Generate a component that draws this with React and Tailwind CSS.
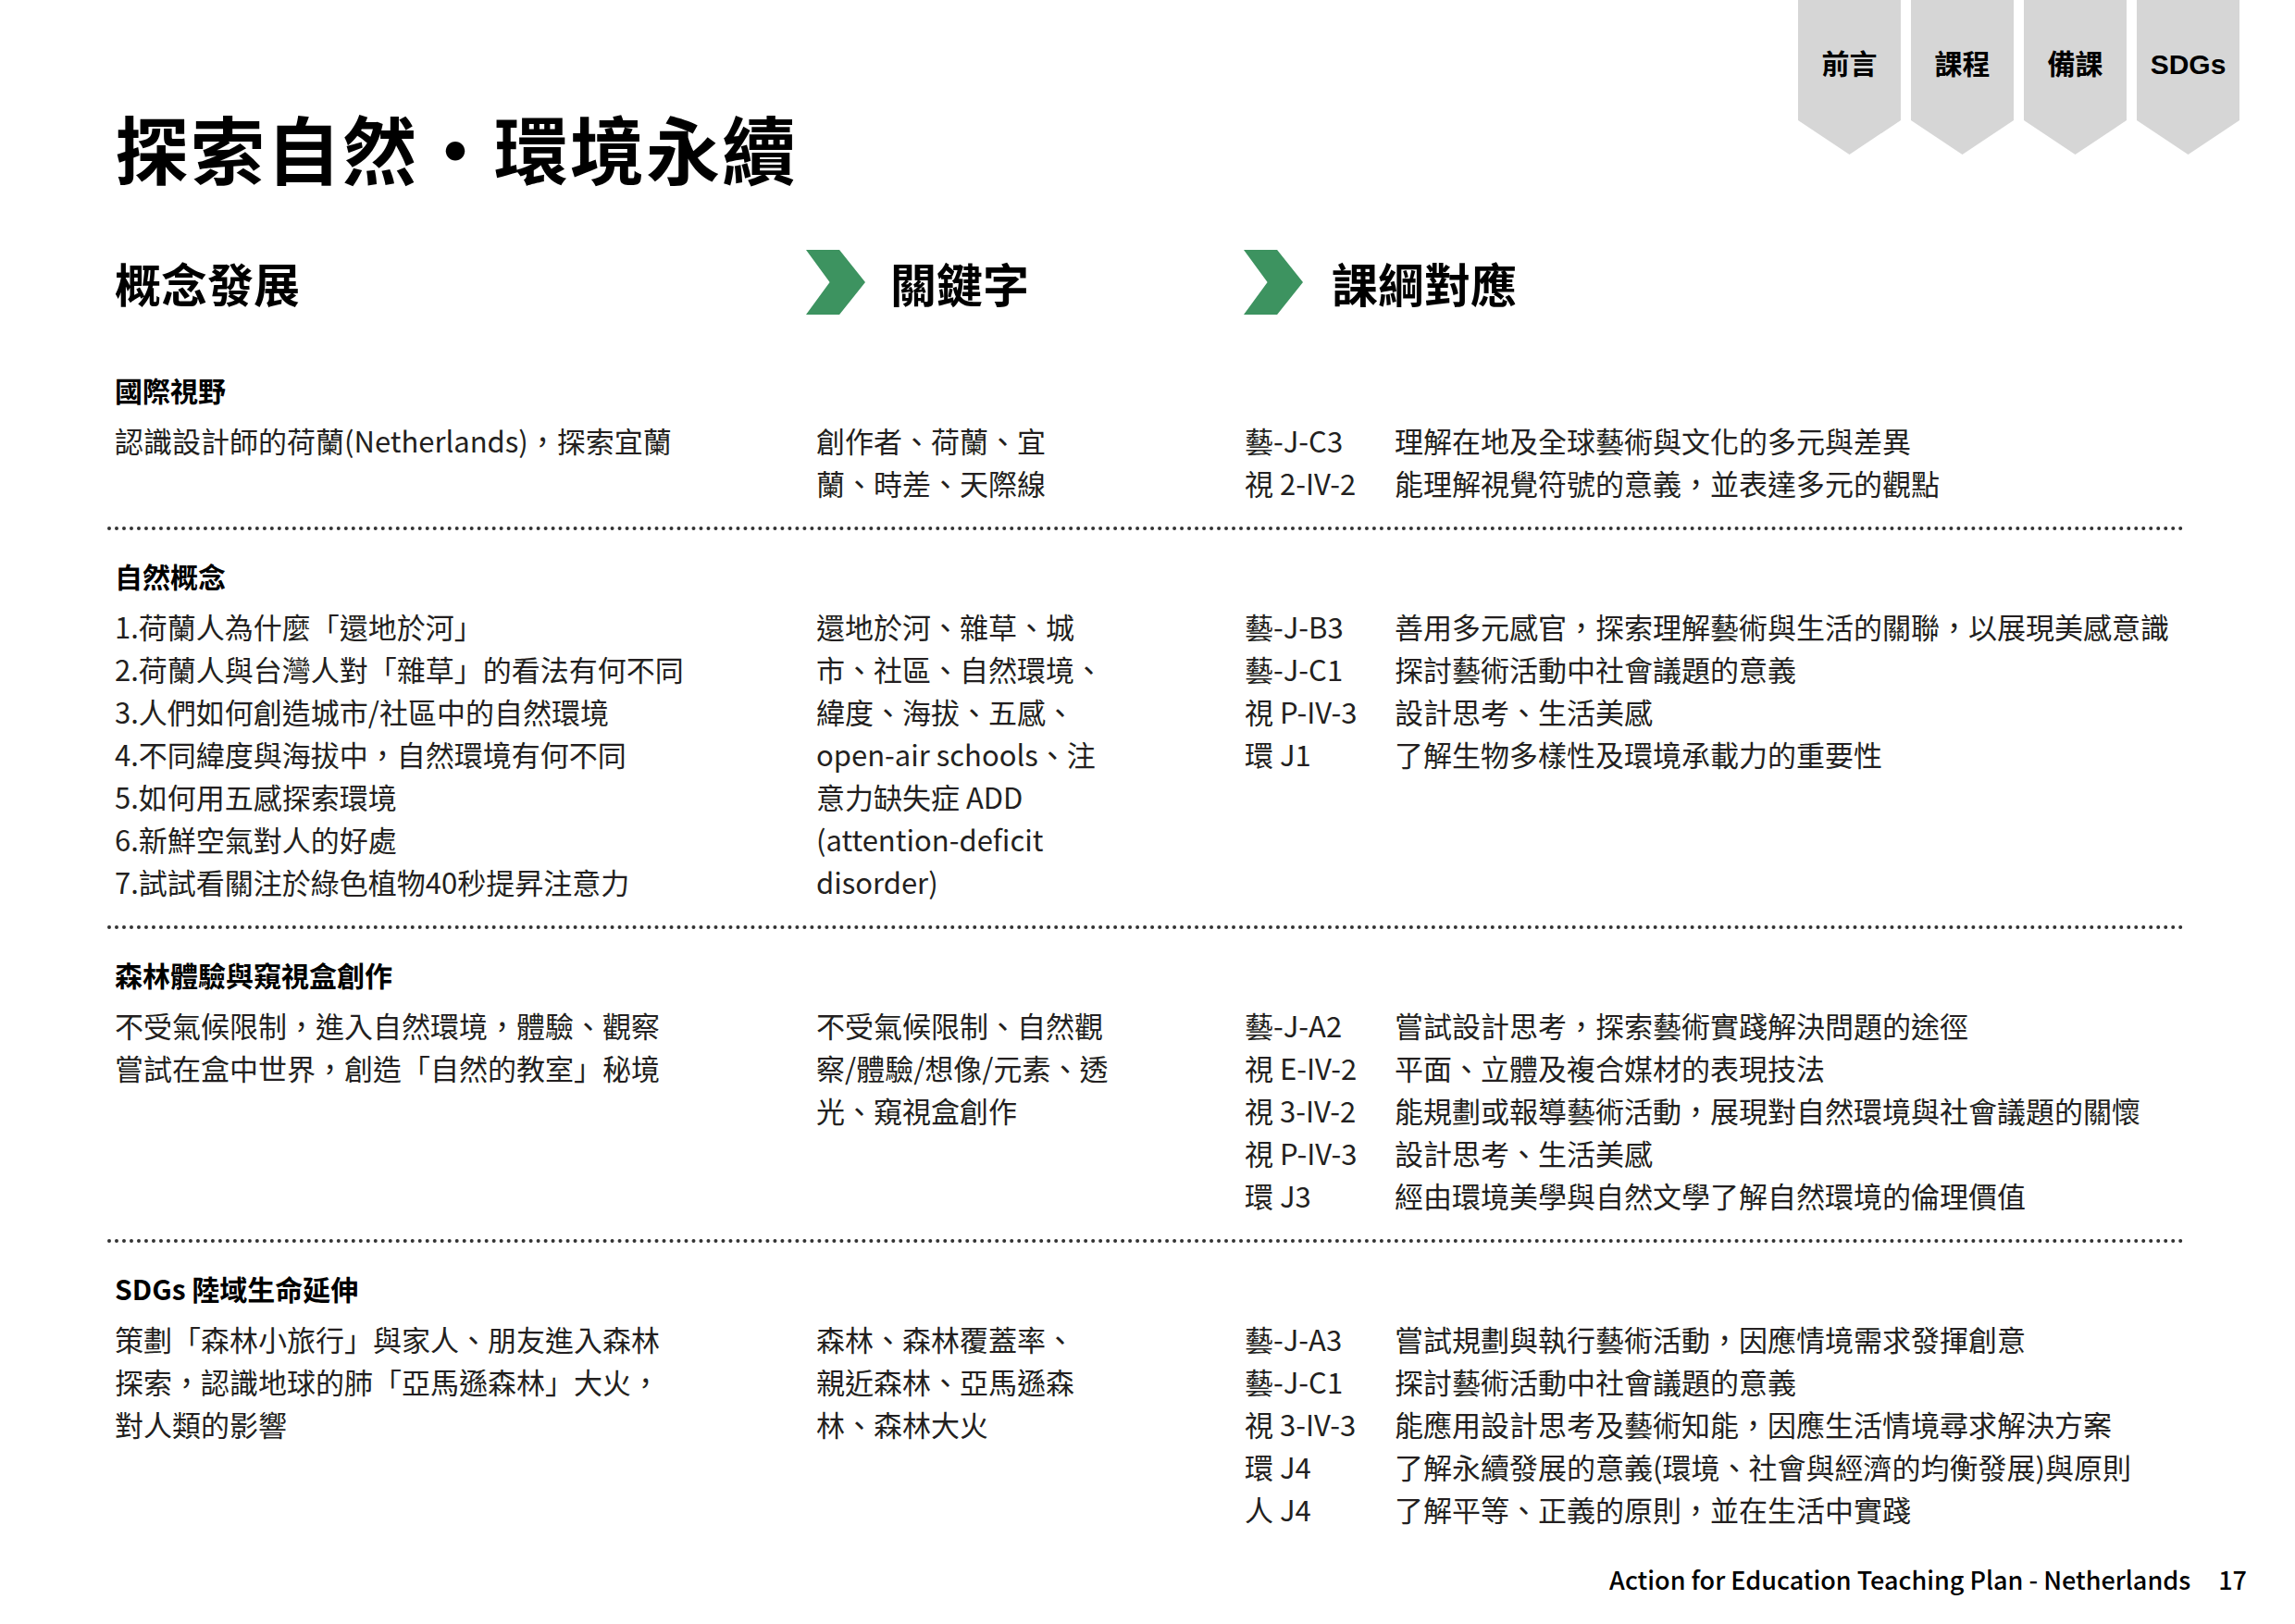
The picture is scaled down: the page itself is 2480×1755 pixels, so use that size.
import React from 'react';

const font = { fontFamily: '"Noto Sans CJK TC", "Noto Sans", sans-serif' };

const sections = [
  {
    title: '國際視野',
    concept: ['認識設計師的荷蘭(Netherlands)，探索宜蘭'],
    keywords: ['創作者、荷蘭、宜', '蘭、時差、天際線'],
    codes: [
      ['藝-J-C3', '理解在地及全球藝術與文化的多元與差異'],
      ['視 2-IV-2', '能理解視覺符號的意義，並表達多元的觀點'],
    ],
  },
  {
    title: '自然概念',
    concept: [
      '1.荷蘭人為什麼「還地於河」',
      '2.荷蘭人與台灣人對「雜草」的看法有何不同',
      '3.人們如何創造城市/社區中的自然環境',
      '4.不同緯度與海拔中，自然環境有何不同',
      '5.如何用五感探索環境',
      '6.新鮮空氣對人的好處',
      '7.試試看關注於綠色植物40秒提昇注意力',
    ],
    keywords: ['還地於河、雜草、城', '市、社區、自然環境、', '緯度、海拔、五感、', 'open-air schools、注', '意力缺失症 ADD', '(attention-deficit', 'disorder)'],
    codes: [
      ['藝-J-B3', '善用多元感官，探索理解藝術與生活的關聯，以展現美感意識'],
      ['藝-J-C1', '探討藝術活動中社會議題的意義'],
      ['視 P-IV-3', '設計思考、生活美感'],
      ['環 J1', '了解生物多樣性及環境承載力的重要性'],
    ],
  },
  {
    title: '森林體驗與窺視盒創作',
    concept: ['不受氣候限制，進入自然環境，體驗、觀察', '嘗試在盒中世界，創造「自然的教室」秘境'],
    keywords: ['不受氣候限制、自然觀', '察/體驗/想像/元素、透', '光、窺視盒創作'],
    codes: [
      ['藝-J-A2', '嘗試設計思考，探索藝術實踐解決問題的途徑'],
      ['視 E-IV-2', '平面、立體及複合媒材的表現技法'],
      ['視 3-IV-2', '能規劃或報導藝術活動，展現對自然環境與社會議題的關懷'],
      ['視 P-IV-3', '設計思考、生活美感'],
      ['環 J3', '經由環境美學與自然文學了解自然環境的倫理價值'],
    ],
  },
  {
    title: 'SDGs 陸域生命延伸',
    concept: ['策劃「森林小旅行」與家人、朋友進入森林', '探索，認識地球的肺「亞馬遜森林」大火，', '對人類的影響'],
    keywords: ['森林、森林覆蓋率、', '親近森林、亞馬遜森', '林、森林大火'],
    codes: [
      ['藝-J-A3', '嘗試規劃與執行藝術活動，因應情境需求發揮創意'],
      ['藝-J-C1', '探討藝術活動中社會議題的意義'],
      ['視 3-IV-3', '能應用設計思考及藝術知能，因應生活情境尋求解決方案'],
      ['環 J4', '了解永續發展的意義(環境、社會與經濟的均衡發展)與原則'],
      ['人 J4', '了解平等、正義的原則，並在生活中實踐'],
    ],
  },
];

const Chevron = () => (
  <svg width="64" height="70" viewBox="0 0 55 60" className="shrink-0">
    <polygon points="0,0 31,0 55,30 31,60 0,60 22,30" fill="#3d9360" />
  </svg>
);

const Tab = ({ label }) => (
  <div className="relative w-[111px] h-[167px]">
    <svg width="111" height="167" viewBox="0 0 111 167" className="absolute inset-0">
      <polygon points="0,0 111,0 111,130 55.5,167 0,130" fill="#d6d6d6" />
    </svg>
    <div className="relative pt-[50px] text-center text-[30px] font-bold text-black leading-[40px]" style={{ fontFamily: '"Liberation Sans", "Noto Sans CJK TC", sans-serif' }}>
      {label}
    </div>
  </div>
);

export default function App() {
  return (
    <div className="relative w-[2480px] h-[1755px] bg-white text-[#231f20] flex flex-col overflow-hidden" style={font}>
      <div className="absolute top-0 left-[1943px] flex gap-[11px]">
        {['前言', '課程', '備課', 'SDGs'].map((t) => (
          <Tab key={t} label={t} />
        ))}
      </div>

      <div className="pl-[124px] pt-[118px]">
        <h1 className="text-[80px] font-bold leading-none text-black tracking-[2px]">探索自然・環境永續</h1>

        <div className="grid grid-cols-[754px_467px_1fr] mt-[72px] items-center h-[70px]">
          <div className="text-[50px] font-bold leading-none text-black">概念發展</div>
          <div className="flex items-center gap-[27px] -ml-[7px]">
            <Chevron />
            <span className="text-[50px] font-bold leading-none text-black">關鍵字</span>
          </div>
          <div className="flex items-center gap-[31px] -ml-[1px]">
            <Chevron />
            <span className="text-[50px] font-bold leading-none text-black">課綱對應</span>
          </div>
        </div>

        <div className="mt-[58px]">
          {sections.map((s, i) => (
            <div key={s.title}>
              {i > 0 && <div className="-ml-[8px] w-[2245px] border-t-[4px] border-dotted border-[#333] mt-[24px] mb-[26px]" />}
              <div className="text-[30px] font-bold leading-[46px] text-black">{s.title}</div>
              <div className="grid grid-cols-[754px_467px_1fr] mt-[9px] text-[31px] leading-[46px]">
                <div>
                  {s.concept.map((l) => (
                    <div key={l} className="whitespace-nowrap">{l}</div>
                  ))}
                </div>
                <div className="pl-[4px]">
                  {s.keywords.map((l) => (
                    <div key={l} className="whitespace-nowrap">{l}</div>
                  ))}
                </div>
                <div>
                  {s.codes.map(([c, d]) => (
                    <div key={c + d} className="flex whitespace-nowrap">
                      <span className="w-[162px] shrink-0">{c}</span>
                      <span>{d}</span>
                    </div>
                  ))}
                </div>
              </div>
            </div>
          ))}
        </div>
      </div>

      <div className="mt-auto pb-[28px] pr-[52px] flex justify-end items-baseline gap-[30px] text-[27px] font-medium text-black">
        <span>Action for Education Teaching Plan - Netherlands</span>
        <span>17</span>
      </div>
    </div>
  );
}
